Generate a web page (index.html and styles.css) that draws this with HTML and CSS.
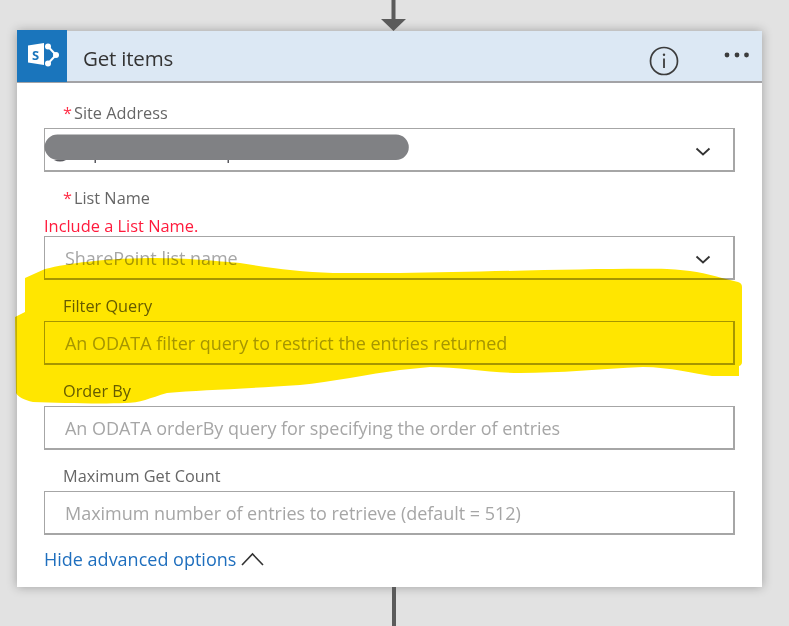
FILE: index.html
```html
<!DOCTYPE html>
<html lang="en">
<head>
  <meta charset="UTF-8">
  <title>Get items</title>
  <link rel="stylesheet" href="styles.css">
</head>
<body>
  <div class="connector connector-top">
    <svg width="25" height="31" viewBox="0 0 25 31"><path d="M10.500 0h4v19H25L12.500 31 0 19h10.500z" fill="#5b5b5b"/></svg>
  </div>

  <div class="card">
    <div class="card-head">
      <div class="logo">
        <svg width="50" height="51" viewBox="0 0 50 51">
          <path d="M31 16.500l8 8.500-8 8.500" fill="none" stroke="#fff" stroke-width="2"/>
          <circle cx="31" cy="16.500" r="3" fill="#fff"/>
          <circle cx="39" cy="25" r="3" fill="#fff"/>
          <circle cx="31" cy="33.500" r="3" fill="#fff"/>
          <path d="M11 15.500l16-2.500v22l-16-2.500z" fill="#fff"/>
          <text x="15" y="29.500" class="logo-s">S</text>
        </svg>
      </div>
      <div class="title">Get items</div>
      <svg class="info" width="30" height="30" viewBox="0 0 30 30">
        <circle cx="15" cy="15" r="13.500" fill="none" stroke="#3c3c3c" stroke-width="1.700"/>
        <path d="M15 12.500V22" stroke="#3c3c3c" stroke-width="1.800"/>
        <circle cx="15" cy="8.800" r="1.200" fill="#3c3c3c"/>
      </svg>
      <svg class="more" width="26" height="6" viewBox="0 0 26 6">
        <circle cx="3" cy="3" r="2.400" fill="#3c3c3c"/>
        <circle cx="13" cy="3" r="2.400" fill="#3c3c3c"/>
        <circle cx="22.500" cy="3" r="2.400" fill="#3c3c3c"/>
      </svg>
    </div>

    <div class="card-body">
      <div class="field">
        <label class="lbl"><span class="req">*</span>Site Address</label>
        <div class="box">
          <svg class="chev" width="16" height="9" viewBox="0 0 16 9"><path d="M1.500 1.500L8 7.500l6.500-6" fill="none" stroke="#333" stroke-width="1.800"/></svg>
        </div>
      </div>
      <div class="field">
        <label class="lbl lbl-tight"><span class="req">*</span>List Name</label>
        <div class="err">Include a List Name.</div>
        <div class="box ph">SharePoint list name
          <svg class="chev" width="16" height="9" viewBox="0 0 16 9"><path d="M1.500 1.500L8 7.500l6.500-6" fill="none" stroke="#333" stroke-width="1.800"/></svg>
        </div>
      </div>
      <div class="field">
        <label class="lbl">Filter Query</label>
        <div class="box ph">An ODATA filter query to restrict the entries returned</div>
      </div>
      <div class="field">
        <label class="lbl">Order By</label>
        <div class="box ph">An ODATA orderBy query for specifying the order of entries</div>
      </div>
      <div class="field">
        <label class="lbl">Maximum Get Count</label>
        <div class="box ph">Maximum number of entries to retrieve (default = 512)</div>
      </div>
      <div class="more-link">
        <a href="#">Hide advanced options</a>
        <svg width="23" height="14" viewBox="0 0 23 14"><path d="M1 13L11.500 2 22 13" fill="none" stroke="#333" stroke-width="1.600"/></svg>
      </div>
    </div>
  </div>

  <div class="connector connector-bottom"></div>

  <!-- hand drawn markup on top of the screenshot -->
  <svg class="scribble" width="789" height="626" viewBox="0 0 789 626">
    <path class="peek" d="M94.500 160h1.500v3h-1.500zM227.500 160h1.500v3h-1.500zM54 160h12q-6 3-12 0z"/>
    <path class="smear" d="M58 134.500H396a12.800 12.800 0 0 1 0 25.600H58a13.500 13.500 0 0 1-13.500-13 13 13 0 0 1 13.500-12.600z"/>
    <path class="marker" d="M25 278L45 269C70 263 100 259 150 258C190 258 215 261 240 263C270 268 300 272 333 273L400 273C480 272 600 268 667 269C690 270 705 273 722 278L738 282Q742 283 742 287L742 362Q742 365 739 366L739 376L712 376C695 374 670 367 643 367C600 369 560 373 520 373C490 373 460 367 430 367L400 370C370 374 330 382 300 385C240 389 200 390 167 393C150 398 140 403 125 403C100 404 60 403 33 402C24 400 18 397 16 393L15 317L25 312z"/>
  </svg>
</body>
</html>
```

FILE: styles.css
```css
html, body {
  margin: 0;
  padding: 0;
}

body {
  position: relative;
  width: 789px;
  height: 626px;
  overflow: hidden;
  background: #e2e2e2;
  font-family: "Open Sans", "Noto Sans", sans-serif;
}

.connector-top {
  height: 31px;
  padding-left: 381px;
  box-sizing: border-box;
}

.connector-top svg {
  display: block;
}

.connector-bottom {
  width: 4px;
  height: 39px;
  margin-left: 392px;
  background: #5b5b5b;
}

.card {
  width: 745px;
  margin-left: 17px;
  background: #fff;
  box-shadow: 0 0 10px rgba(0, 0, 0, 0.3);
}

.card-head {
  display: flex;
  align-items: center;
  height: 50px;
  background: #dce8f4;
  border-bottom: 2px solid #a3a3a6;
}

.logo {
  width: 50px;
  height: 52px;
  background: #1a75bc;
}

.logo svg {
  display: block;
}

.logo-s {
  font-size: 13px;
  font-weight: 700;
  fill: #1a75bc;
}

.title {
  margin-left: 16px;
  margin-top: 3px;
  flex: 1;
  font-size: 20.500px;
  letter-spacing: -0.2px;
  color: #333;
}

.info {
  margin-right: 45px;
  margin-top: 10px;
}

.more {
  margin-right: 12px;
  margin-top: -2px;
}

.card-body {
  padding: 4px 27px 16px;
}

.field {
  margin-top: 15px;
}

.lbl {
  display: block;
  height: 22px;
  line-height: 22px;
  margin-left: 19px;
  margin-bottom: 4px;
  font-size: 16.300px;
  color: #666;
}

.lbl-tight {
  margin-bottom: 0;
}

.req {
  margin-right: 2px;
  color: #ff2d46;
}

.err {
  height: 20px;
  line-height: 20px;
  margin-top: 7px;
  font-size: 16.400px;
  color: #ff1a3c;
}

.box {
  position: relative;
  box-sizing: border-box;
  height: 44px;
  line-height: 43px;
  padding-left: 20px;
  border-style: solid;
  border-color: #a6a6a6;
  border-width: 1px 2px 2px 1px;
  background: #fff;
}

.ph {
  font-size: 18px;
  letter-spacing: -0.03px;
  color: #a6a6a6;
}

.chev {
  position: absolute;
  right: 22px;
  top: 18px;
}

.more-link {
  display: flex;
  align-items: center;
  gap: 5px;
  height: 22px;
  margin-top: 13px;
  padding-bottom: 1px;
  font-size: 18px;
}

.more-link a {
  color: #1f6fbe;
  text-decoration: none;
}

.scribble {
  position: absolute;
  left: 0;
  top: 0;
  pointer-events: none;
}

.peek {
  fill: #5a5a60;
}

.smear {
  fill: #808184;
}

.marker {
  fill: #ffe600;
  mix-blend-mode: multiply;
}
```
